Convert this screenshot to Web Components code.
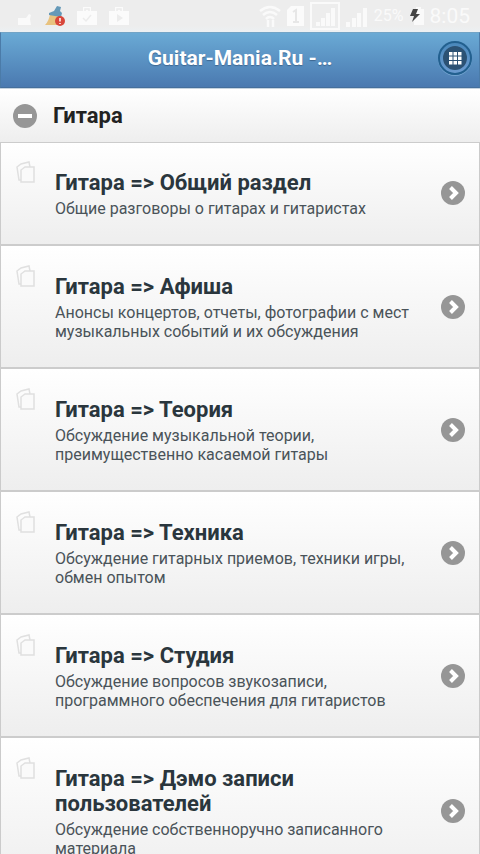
<!DOCTYPE html>
<html lang="ru">
<head>
<meta charset="utf-8">
<meta name="viewport" content="width=device-width, initial-scale=1">
<title>Guitar-Mania.Ru</title>
<style>
html, body { height: 100%; }
body { margin: 0; background: #eee; font-family: Roboto, "Liberation Sans", sans-serif; color: #2c383f; }
</style>
</head>
<body>
<forum-page>
  <status-bar slot="top" battery="25%" time="8:05"></status-bar>
  <app-header slot="top">Guitar-Mania.Ru -…</app-header>
  <forum-section>
    <span slot="heading">Гитара</span>
    <forum-row class="first"><span slot="title">Гитара =&gt; Общий раздел</span>Общие разговоры о гитарах и гитаристах</forum-row>
    <forum-row><span slot="title">Гитара =&gt; Афиша</span>Анонсы концертов, отчеты, фотографии с мест музыкальных событий и их обсуждения</forum-row>
    <forum-row><span slot="title">Гитара =&gt; Теория</span>Обсуждение музыкальной теории, преимущественно касаемой гитары</forum-row>
    <forum-row><span slot="title">Гитара =&gt; Техника</span>Обсуждение гитарных приемов, техники игры, обмен опытом</forum-row>
    <forum-row><span slot="title">Гитара =&gt; Студия</span>Обсуждение вопросов звукозаписи, программного обеспечения для гитаристов</forum-row>
    <forum-row><span slot="title">Гитара =&gt; Дэмо записи пользователей</span>Обсуждение собственноручно записанного материала</forum-row>
  </forum-section>
</forum-page>

<script>
const define = (name, html, setup) => customElements.define(name, class extends HTMLElement {
  constructor() {
    super();
    this.attachShadow({ mode: "open" }).innerHTML = html;
  }
  connectedCallback() {
    if (setup) setup(this, this.shadowRoot);
  }
});

define("forum-page", `
<style>
:host { display: flex; flex-direction: column; height: 100vh; }
main { flex: 1; min-height: 0; overflow-y: auto; scrollbar-width: none; }
</style>
<slot name="top"></slot>
<main><slot></slot></main>`);

define("status-bar", `
<style>
:host { display: flex; justify-content: space-between; align-items: center; box-sizing: border-box; height: 32px; flex: none;
  padding: 0 10px 0 16px; background: linear-gradient(#ededed 26px, #ecf0f3); color: #fafafa; }
div { display: flex; align-items: center; gap: 6px; }
.left { gap: 12px; }
svg { display: block; }
.pct { font-size: 16px; line-height: 20px; }
.time { font-size: 21px; line-height: 28px; }
</style>
<div class="left">
  <svg width="17" height="22" viewBox="0 0 17 22" fill="#fafafa"><path d="M2 13h8l3-4 2 1-1 4 1 6H2z"/></svg>
  <svg width="20" height="22" viewBox="0 0 20 22"><path d="M5 9l10 2 1 9H0q4-4 5-11z" fill="#e8c27e"/><path d="M4 8l5-2 3-5 4 1-1 4 2 2-1 4L4 10z" fill="#6599b8"/><circle cx="15" cy="16" r="5" fill="#d8463a"/><path d="M15 13v3.500M15 18v1" stroke="#fff" stroke-width="1.500"/></svg>
  <svg width="20" height="20" viewBox="0 0 20 20"><path d="M0 5h6V1h8v4h6v14H0z" fill="#fbfbfb"/><path d="M8 5V3h4v2M6 12l3 3 5-6" fill="none" stroke="#ececec" stroke-width="1.500"/></svg>
  <svg width="20" height="20" viewBox="0 0 20 20"><path d="M0 5h6V1h8v4h6v14H0z" fill="#fbfbfb"/><path d="M8 5V3h4v2" fill="none" stroke="#ececec" stroke-width="1.500"/><path d="M8 8l6 4-6 4z" fill="#ececec"/></svg>
</div>
<div>
  <svg width="22" height="24" viewBox="0 0 22 24" fill="none" stroke="#fafafa" stroke-width="2.500"><path d="M1 7q10-8 20 0M4 11q7-6 14 0M7 15q4-4 8 0M9 16v7M14 16v7"/></svg>
  <svg width="17" height="20" viewBox="0 0 17 20"><path d="M4 0h13v20H0V4z" fill="#fbfbfb"/><path d="M6 6l3-2v12M6 16h6" fill="none" stroke="#e7e7e7" stroke-width="2"/></svg>
  <svg width="30" height="28" viewBox="0 0 30 28"><path d="M1 1h28v26H1z" fill="none" stroke="#fafafa" stroke-width="2"/><path d="M6 20h4v4H6zM11 16h4v8h-4zM16 11h4v13h-4zM21 6h4v18h-4z" fill="#fafafa"/></svg>
  <svg width="22" height="28" viewBox="0 0 22 28"><path d="M0 20h4v5H0zM6 16h4v9H6zM11 11h4v14h-4zM17 6h4v19h-4z" fill="#fafafa"/></svg>
  <span class="pct"></span>
  <svg width="14" height="20" viewBox="0 0 14 20"><path d="M4 3h2V1h5v2h3v16H4z" fill="#fafafa"/><path d="M3 3h5L6 8h4L2 16l2-6H0z" fill="#444"/></svg>
  <span class="time"></span>
</div>`, (el, root) => {
  root.querySelector(".pct").textContent = el.getAttribute("battery");
  root.querySelector(".time").textContent = el.getAttribute("time");
});

define("app-header", `
<style>
:host { display: grid; grid-template-columns: 1fr auto 1fr; align-items: center; box-sizing: border-box; height: 56px; flex: none;
  padding: 0 7px 4px; background: linear-gradient(#6aaad5, #4a79b0); border: 1px solid #4b7ba8; border-top-color: #72a4c6; border-bottom-color: #456f9c; }
h1 { grid-column: 2; margin: 0; font-size: 21px; line-height: 28px; font-weight: 700; color: #fff; text-shadow: 0 1px 1px #3e6790; white-space: nowrap; }
button { justify-self: end; width: 34px; height: 34px; padding: 0; display: grid; place-items: center; border: 2px solid #22608f; border-radius: 50%;
  background: linear-gradient(#4a88bb, #6b9bd0); box-shadow: 0 1px 0 #73a5d0; cursor: pointer; }
svg { display: block; }
</style>
<h1><slot></slot></h1>
<button type="button" aria-label="Меню"><svg width="24" height="24" viewBox="0 0 24 24"><circle cx="12" cy="12" r="12" fill="#2c5274"/><path d="M6 6h3.500v3.500H6zM10.500 6H14v3.500h-3.500zM15 6h3.500v3.500H15zM6 10.500h3.500V14H6zM10.500 10.500H14V14h-3.500zM15 10.500h3.500V14H15zM6 15h3.500v3.500H6zM10.500 15H14v3.500h-3.500zM15 15h3.500v3.500H15z" fill="#fff"/></svg></button>`);

define("forum-section", `
<style>
:host { display: block; }
h2 { margin: 0; font-size: 22px; line-height: 26px; }
button { display: flex; align-items: center; gap: 16px; width: 100%; height: 54px; padding: 1px 13px 0; border: 0; border-top: 1px solid #c5d3e0;
  background: linear-gradient(#fff, #eee); font: inherit; font-weight: 700; color: #222; text-align: left; cursor: pointer; }
svg { display: block; }
</style>
<h2><button type="button" aria-expanded="true"><svg width="24" height="24" viewBox="0 0 24 24"><circle cx="12" cy="12" r="12" fill="#969696"/><path d="M5 10h14v4H5z" fill="#fff"/></svg><slot name="heading"></slot></button></h2>
<slot></slot>`);

define("forum-row", `
<style>
:host { display: block; }
a { display: grid; grid-template-columns: 20px 1fr 24px; column-gap: 19px; align-items: center; padding: 26px 14px 26px 15px;
  border: 1px solid #cbcbcb; border-top: 2px solid #ccc; border-bottom: 0; background: linear-gradient(#fff, #eee); color: inherit; text-decoration: none; }
:host(.first) a { border-top-width: 1px; padding-top: 25px; }
div { padding-top: 2px; }
h3 { margin: 0 0 4px; font-size: 22px; line-height: 25px; font-weight: 700; color: #2a363d; }
p { margin: 0; font-size: 16px; line-height: 19px; color: #4a5359; }
svg { display: block; }
.copy { align-self: start; margin-top: -7px; }
</style>
<a href="#">
  <svg class="copy" width="20" height="24" viewBox="0 0 20 24" fill="none" stroke="#e0e0e0" stroke-width="1.500"><path d="M5 19H3L1 6l4-3 8-2 1 5"/><path d="M9 6h9v15H5V9z" fill="#fafafa"/></svg>
  <div><h3><slot name="title"></slot></h3><p><slot></slot></p></div>
  <svg width="24" height="24" viewBox="0 0 24 24"><circle cx="12" cy="12" r="12" fill="#969696"/><path d="M9.500 6.500l5.500 5.500-5.500 5.500" fill="none" stroke="#fff" stroke-width="4"/></svg>
</a>`);
</script>
</body>
</html>
